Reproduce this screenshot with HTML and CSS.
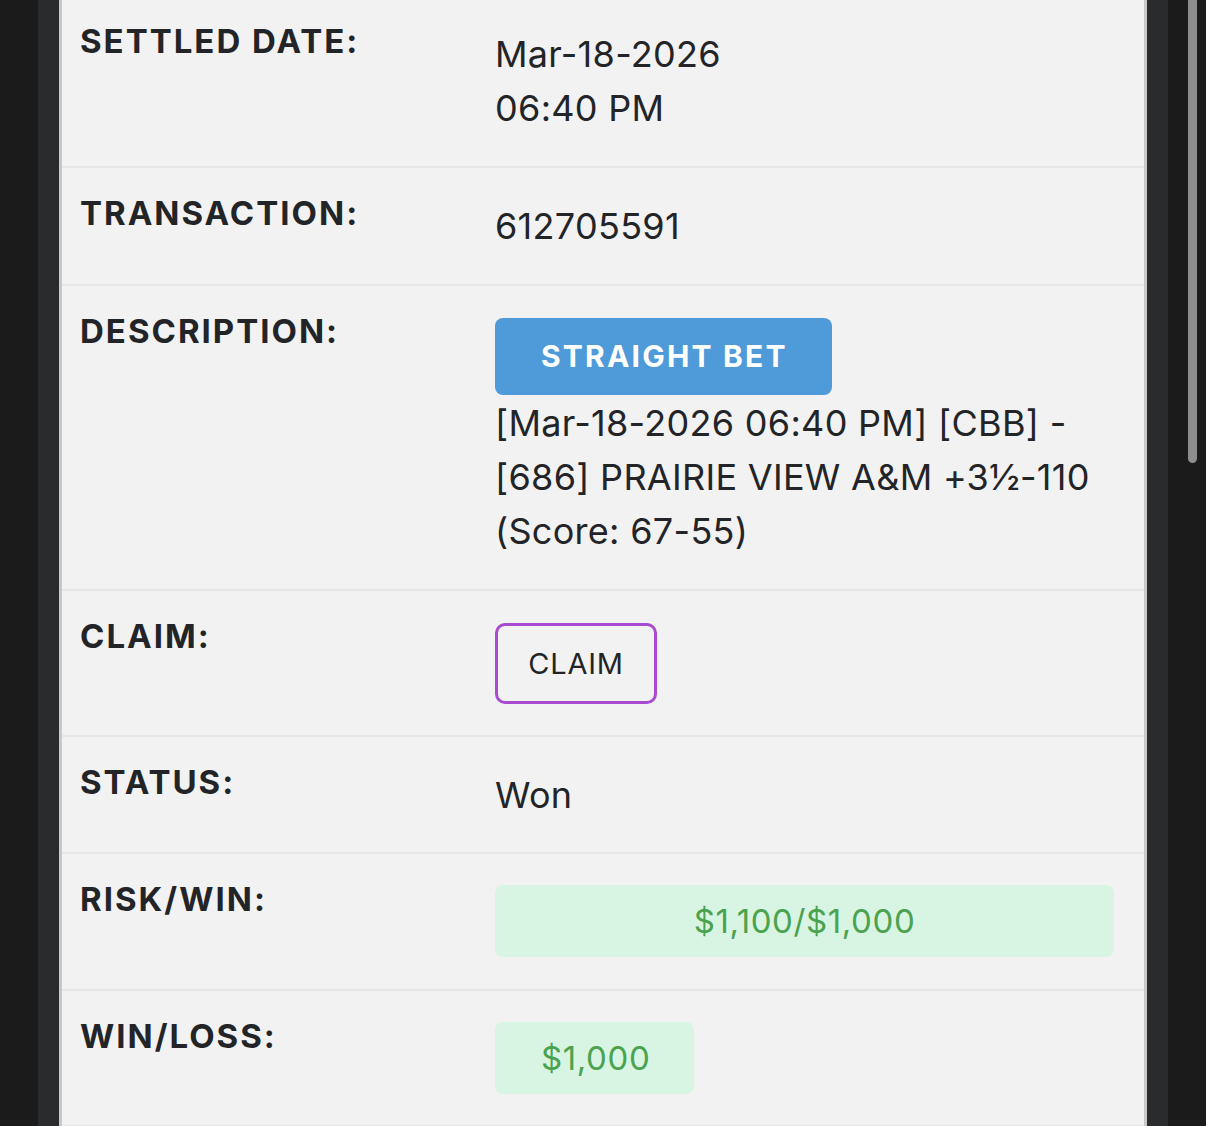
FILE: index.html
```html
<!DOCTYPE html>
<html lang="en">
<head>
    <meta charset="UTF-8">
    <meta name="viewport" content="width=device-width, initial-scale=1.0">
    <title>Wager Detail</title>
    <link rel="stylesheet" href="styles.css">
</head>
<body>
    <div class="frame">
        <div class="panel">
            <div class="row">
                <div class="label">SETTLED DATE:</div>
                <div class="value">Mar-18-2026<br>06:40 PM</div>
            </div>
            <div class="row">
                <div class="label">TRANSACTION:</div>
                <div class="value">612705591</div>
            </div>
            <div class="row">
                <div class="label">DESCRIPTION:</div>
                <div class="value">
                    <div class="bet-type">STRAIGHT BET</div>
                    <div class="desc">[Mar-18-2026 06:40 PM] [CBB] - [686] PRAIRIE VIEW A&amp;M +3½-110 (Score: 67-55)</div>
                </div>
            </div>
            <div class="row">
                <div class="label">CLAIM:</div>
                <div class="value">
                    <button class="claim-btn">CLAIM</button>
                </div>
            </div>
            <div class="row row-short">
                <div class="label">STATUS:</div>
                <div class="value">Won</div>
            </div>
            <div class="row">
                <div class="label">RISK/WIN:</div>
                <div class="value">
                    <div class="money money-wide">$1,100/$1,000</div>
                </div>
            </div>
            <div class="row">
                <div class="label">WIN/LOSS:</div>
                <div class="value">
                    <div class="money">$1,000</div>
                </div>
            </div>
        </div>
    </div>
    <div class="scroll-thumb"></div>
</body>
</html>
```

FILE: styles.css
```css
html, body {
    margin: 0;
    height: 100%;
}

body {
    background: #1b1b1b;
    font-family: Inter, "Noto Sans", sans-serif;
    color: #232427;
    overflow: hidden;
}

.frame {
    width: 1130px;
    min-height: 100%;
    margin-left: 38px;
    padding: 0 21px;
    box-sizing: border-box;
    background: #2a2b2d;
}

.panel {
    margin-top: -4px;
    background: #f2f2f2;
    border-left: 3px solid #c9c9c9;
    border-right: 3px solid #c9c9c9;
    min-height: 1140px;
}

.row {
    display: grid;
    grid-template-columns: 415px 1fr;
    padding: 31px 30px 31px 18px;
    border-bottom: 2px solid #e7e7e7;
}

.row-short {
    padding-bottom: 30px;
}

.label {
    font-size: 33px;
    font-weight: 700;
    line-height: 24px;
    letter-spacing: 2px;
    padding-top: 2px;
}

.value {
    font-size: 36px;
    line-height: 54px;
    letter-spacing: 0.3px;
}

/* 파란 베팅 타입 뱃지 */
.bet-type {
    width: fit-content;
    margin-top: 1px;
    background: #4f9ad8;
    color: #fff;
    font-size: 30px;
    font-weight: 700;
    letter-spacing: 2.2px;
    line-height: 77px;
    padding: 0 44px 0 46px;
    border-radius: 8px;
}

.desc {
    margin-top: 1px;
}

.claim-btn {
    width: 162px;
    height: 81px;
    margin-top: 1px;
    background: transparent;
    border: 3px solid #a94bd0;
    border-radius: 10px;
    font-family: inherit;
    font-size: 29px;
    color: #232427;
    letter-spacing: 0.8px;
    padding: 0;
    vertical-align: top;
}

.money {
    display: inline-block;
    background: #d8f5e3;
    color: #4ba24f;
    font-size: 33px;
    line-height: 72px;
    letter-spacing: 0.6px;
    padding: 0 44px 0 46px;
    border-radius: 8px;
    text-align: center;
    vertical-align: top;
}

.money-wide {
    display: block;
    padding: 0;
    margin-bottom: 1px;
}

.scroll-thumb {
    position: fixed;
    top: 0;
    left: 1188px;
    width: 9px;
    height: 463px;
    background: #8e8e8e;
    border-radius: 0 0 5px 5px;
}
```
